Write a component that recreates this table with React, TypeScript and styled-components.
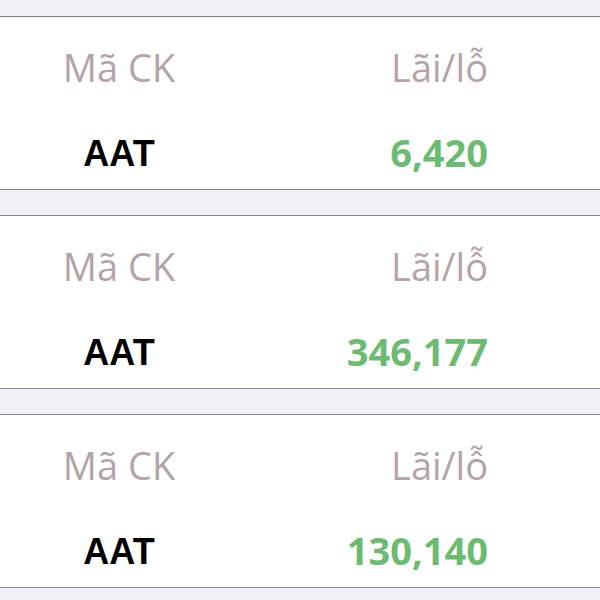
import React from "react";
import styled, { createGlobalStyle } from "styled-components";

const Global = createGlobalStyle`
  html, body {
    margin: 0;
    padding: 0;
    overflow: hidden;
    background: #f0f0f4;
  }
`;

const Page = styled.div`
  display: flex;
  flex-direction: column;
  gap: 25px;
  padding-top: 16px;
  width: 600px;
  height: 600px;
  overflow: hidden;
  background: #f0f0f4;
`;

const Card = styled.div`
  display: grid;
  grid-template-columns: 238px 1fr;
  grid-template-rows: 70px 70px;
  row-gap: 15px;
  align-items: center;
  box-sizing: border-box;
  height: 174px;
  padding-top: 15px;
  background: #ffffff;
  border-top: 1px solid #858585;
  border-bottom: 1px solid #858585;
  flex-shrink: 0;
`;

const Header = styled.div<{ $right?: boolean }>`
  font-family: "Open Sans", sans-serif;
  font-size: 38px;
  font-weight: 400;
  color: #b3a4aa;
  text-align: ${(p) => (p.$right ? "right" : "center")};
  padding-right: ${(p) => (p.$right ? "112px" : "0")};
  line-height: 1;
`;

const Symbol = styled.div`
  font-family: "Liberation Sans", Arial, sans-serif;
  font-size: 36px;
  font-weight: 700;
  color: #000;
  text-align: center;
  line-height: 1;
  padding-top: 4px;
`;

const Value = styled.div`
  font-family: "Open Sans", sans-serif;
  font-size: 38px;
  font-weight: 700;
  color: #6dbb72;
  text-align: right;
  padding-right: 112px;
  line-height: 1;
`;

const rows = [
  { sym: "AAT", pl: "6,420" },
  { sym: "AAT", pl: "346,177" },
  { sym: "AAT", pl: "130,140" },
];

export default function App() {
  return (
    <>
      <Global />
      <Page>
        {rows.map((r, i) => (
          <Card key={i}>
            <Header>Mã CK</Header>
            <Header $right>Lãi/lỗ</Header>
            <Symbol>{r.sym}</Symbol>
            <Value>{r.pl}</Value>
          </Card>
        ))}
      </Page>
    </>
  );
}
